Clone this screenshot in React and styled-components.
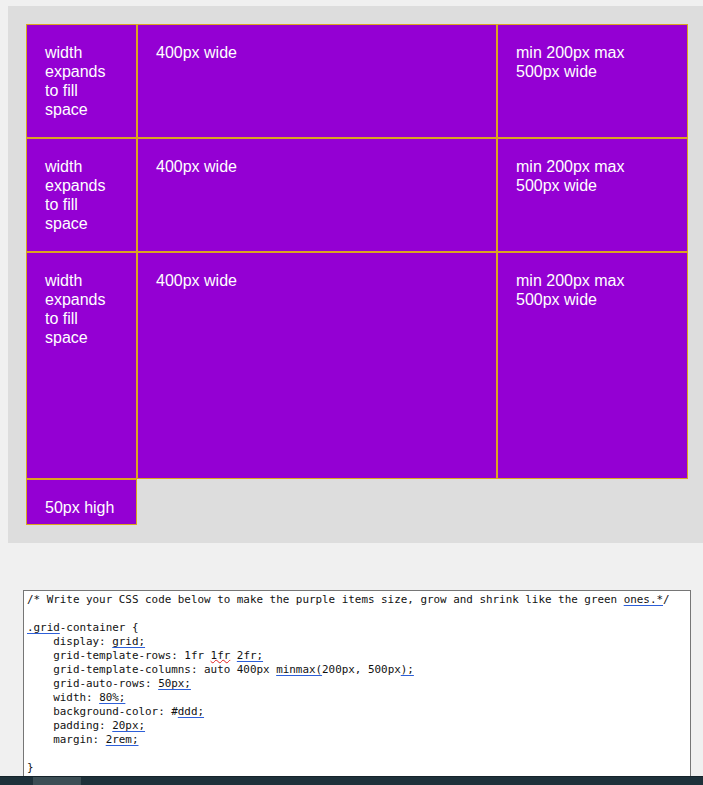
import React from 'react';
import styled, {createGlobalStyle} from 'styled-components';

export const GlobalStyle = createGlobalStyle`
  * {
    box-sizing: border-box;
  }

  html, body {
    margin: 0;
    padding: 0;
    height: 100%;
    overflow: hidden;
    background-color: #f0f0f0;
  }

  #root {
    height: 100%;
  }
`;

const Page = styled.div`
  display: flex;
  flex-direction: column;
  height: 100vh;
`;

const Content = styled.div`
  flex: 1;
  overflow: hidden;
  padding: 6px 0 0 8px;
`;

const GridContainer = styled.div`
  display: grid;
  grid-template-columns: 111px 360px 191px;
  grid-template-rows: 114px 114px 227px;
  grid-auto-rows: 46px;
  width: 698px;
  padding: 18px;
  background-color: #ddd;
`;

const Item = styled.div`
  background-color: #9400d3;
  border: 1px solid #daa520;
  color: #fff;
  padding: 18px;
  font-family: "Liberation Sans", Arial, sans-serif;
  font-size: 16px;
  line-height: 19px;
`;

const Editor = styled.div`
  margin: 47px 0 0 15px;
  width: 668px;
  height: 220px;
  padding: 2px 3px;
  background: #fff;
  border: 1px solid #767676;
  font-family: "DejaVu Sans Mono", "Liberation Mono", monospace;
  font-size: 10.9px;
  line-height: 14px;
  color: #111;
  white-space: pre;
`;

const Mark = styled.span`
  text-decoration: underline;
  text-decoration-style: ${p => (p.$spelling ? 'wavy' : 'solid')};
  text-decoration-color: ${p => (p.$spelling ? '#e02020' : '#2d5fd8')};
  text-decoration-thickness: 1px;
  text-underline-offset: ${p => (p.$spelling ? '0px' : '2px')};
`;

const Scrollbar = styled.div`
  height: 9px;
  background-color: #1e313a;
  border-top: 1px solid #15232a;
  padding-left: 33px;
  display: flex;
`;

const Thumb = styled.div`
  width: 48px;
  background-color: #3c4e55;
`;

const rows = [0, 1, 2];

export default function App() {
  return (
    <>
      <GlobalStyle/>
      <Page>
        <Content>
          <GridContainer>
            {rows.map(r => (
              <React.Fragment key={r}>
                <Item>width expands to fill space</Item>
                <Item>400px wide</Item>
                <Item>min 200px max 500px wide</Item>
              </React.Fragment>
            ))}
            <Item>50px high</Item>
          </GridContainer>
          <Editor>
            {'/* Write your CSS code below to make the purple items size, grow and shrink like the green '}<Mark>ones.*</Mark>{'/\n'}
            {'\n'}
            <Mark>.grid</Mark>{'-container {\n'}
            {'    display: '}<Mark>grid;</Mark>{'\n'}
            {'    grid-template-rows: 1fr '}<Mark $spelling>1fr</Mark>{' '}<Mark>2fr;</Mark>{'\n'}
            {'    grid-template-columns: auto 400px '}<Mark>minmax(</Mark>{'200px, 500px'}<Mark>);</Mark>{'\n'}
            {'    grid-auto-rows: '}<Mark>50px;</Mark>{'\n'}
            {'    width: '}<Mark>80%;</Mark>{'\n'}
            {'    background-color: #'}<Mark>ddd;</Mark>{'\n'}
            {'    padding: '}<Mark>20px;</Mark>{'\n'}
            {'    margin: '}<Mark>2rem;</Mark>{'\n'}
            {'\n'}
            {'}'}
          </Editor>
        </Content>
        <Scrollbar>
          <Thumb/>
        </Scrollbar>
      </Page>
    </>
  );
}
